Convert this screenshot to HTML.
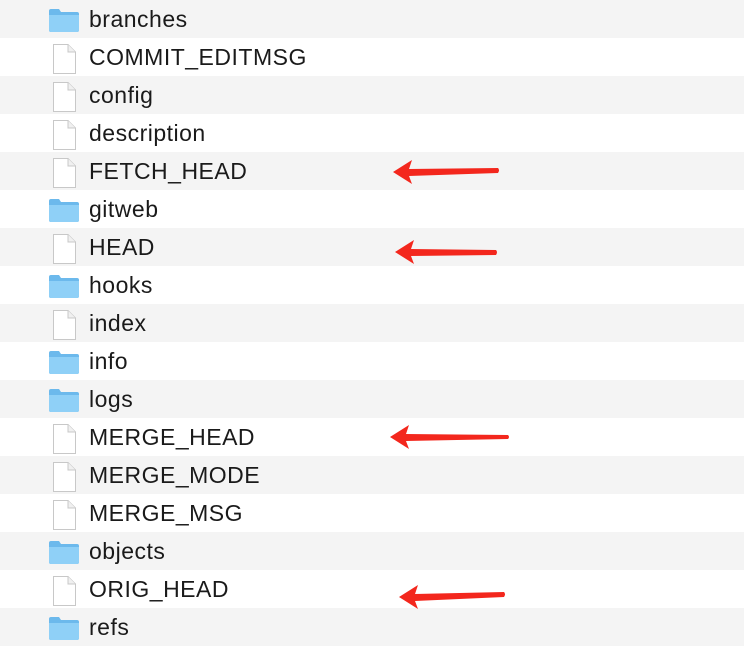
<!DOCTYPE html><html><head><style>
body{margin:0;width:744px;height:648px;overflow:hidden;background:#fff;font-family:"Liberation Sans",Arial,sans-serif;position:relative}
.r{height:38px;position:relative}
.r:nth-child(odd){background:#f4f4f4}
.t{position:absolute;left:89px;top:6px;font-size:23px;letter-spacing:0.5px;color:#1a1a1a}
.i{position:absolute;left:48px;top:4px}
svg.a{position:absolute;left:0;top:0}
</style></head><body>
<div id="l"></div>
<script>
var items=[["branches",1],["COMMIT_EDITMSG",0],["config",0],["description",0],["FETCH_HEAD",0],["gitweb",1],["HEAD",0],["hooks",1],["index",0],["info",1],["logs",1],["MERGE_HEAD",0],["MERGE_MODE",0],["MERGE_MSG",0],["objects",1],["ORIG_HEAD",0],["refs",1]];
var fold='<svg class="i" width="32" height="30" viewBox="0 0 32 30"><path d="M1 7 Q1 5 3 5 H11 L13 8 H29 Q31 8 31 10 V26 Q31 28 29 28 H3 Q1 28 1 26Z" fill="#6cb9ec"/><path d="M1 11 H31 V26 Q31 28 29 28 H3 Q1 28 1 26Z" fill="#8fd0f7"/></svg>';
var file='<svg class="i" width="32" height="34" viewBox="0 0 32 34"><path d="M5.5 2.5 H20 L27.5 10 V31.5 H5.5Z" fill="#fff" stroke="#c8c8c8"/><path d="M20 2.5 V10 H27.5" fill="#f0f0f0" stroke="#c8c8c8"/></svg>';
var h='';items.forEach(function(x){h+='<div class="r">'+(x[1]?fold:file)+'<span class="t">'+x[0]+'</span></div>'});
document.getElementById('l').innerHTML=h;
</script>
<svg class="a" width="744" height="648">
<g fill="#f3271d">
<path d="M393 172 L412 160 L409 169 L498 168 Q500 170 498 173 L409 176 L412 184Z"/>
<path d="M395 252 L414 240 L411 249 L496 250 Q498 252 496 255 L411 256 L414 264Z"/>
<path d="M390 437 L409 425 L406 434 L508 435 Q510 437 508 439 L406 441 L409 449Z"/>
<path d="M399 597 L418 585 L415 594 L504 592 Q506 594 504 597 L415 601 L418 609Z"/>
</g></svg>
</body></html>
